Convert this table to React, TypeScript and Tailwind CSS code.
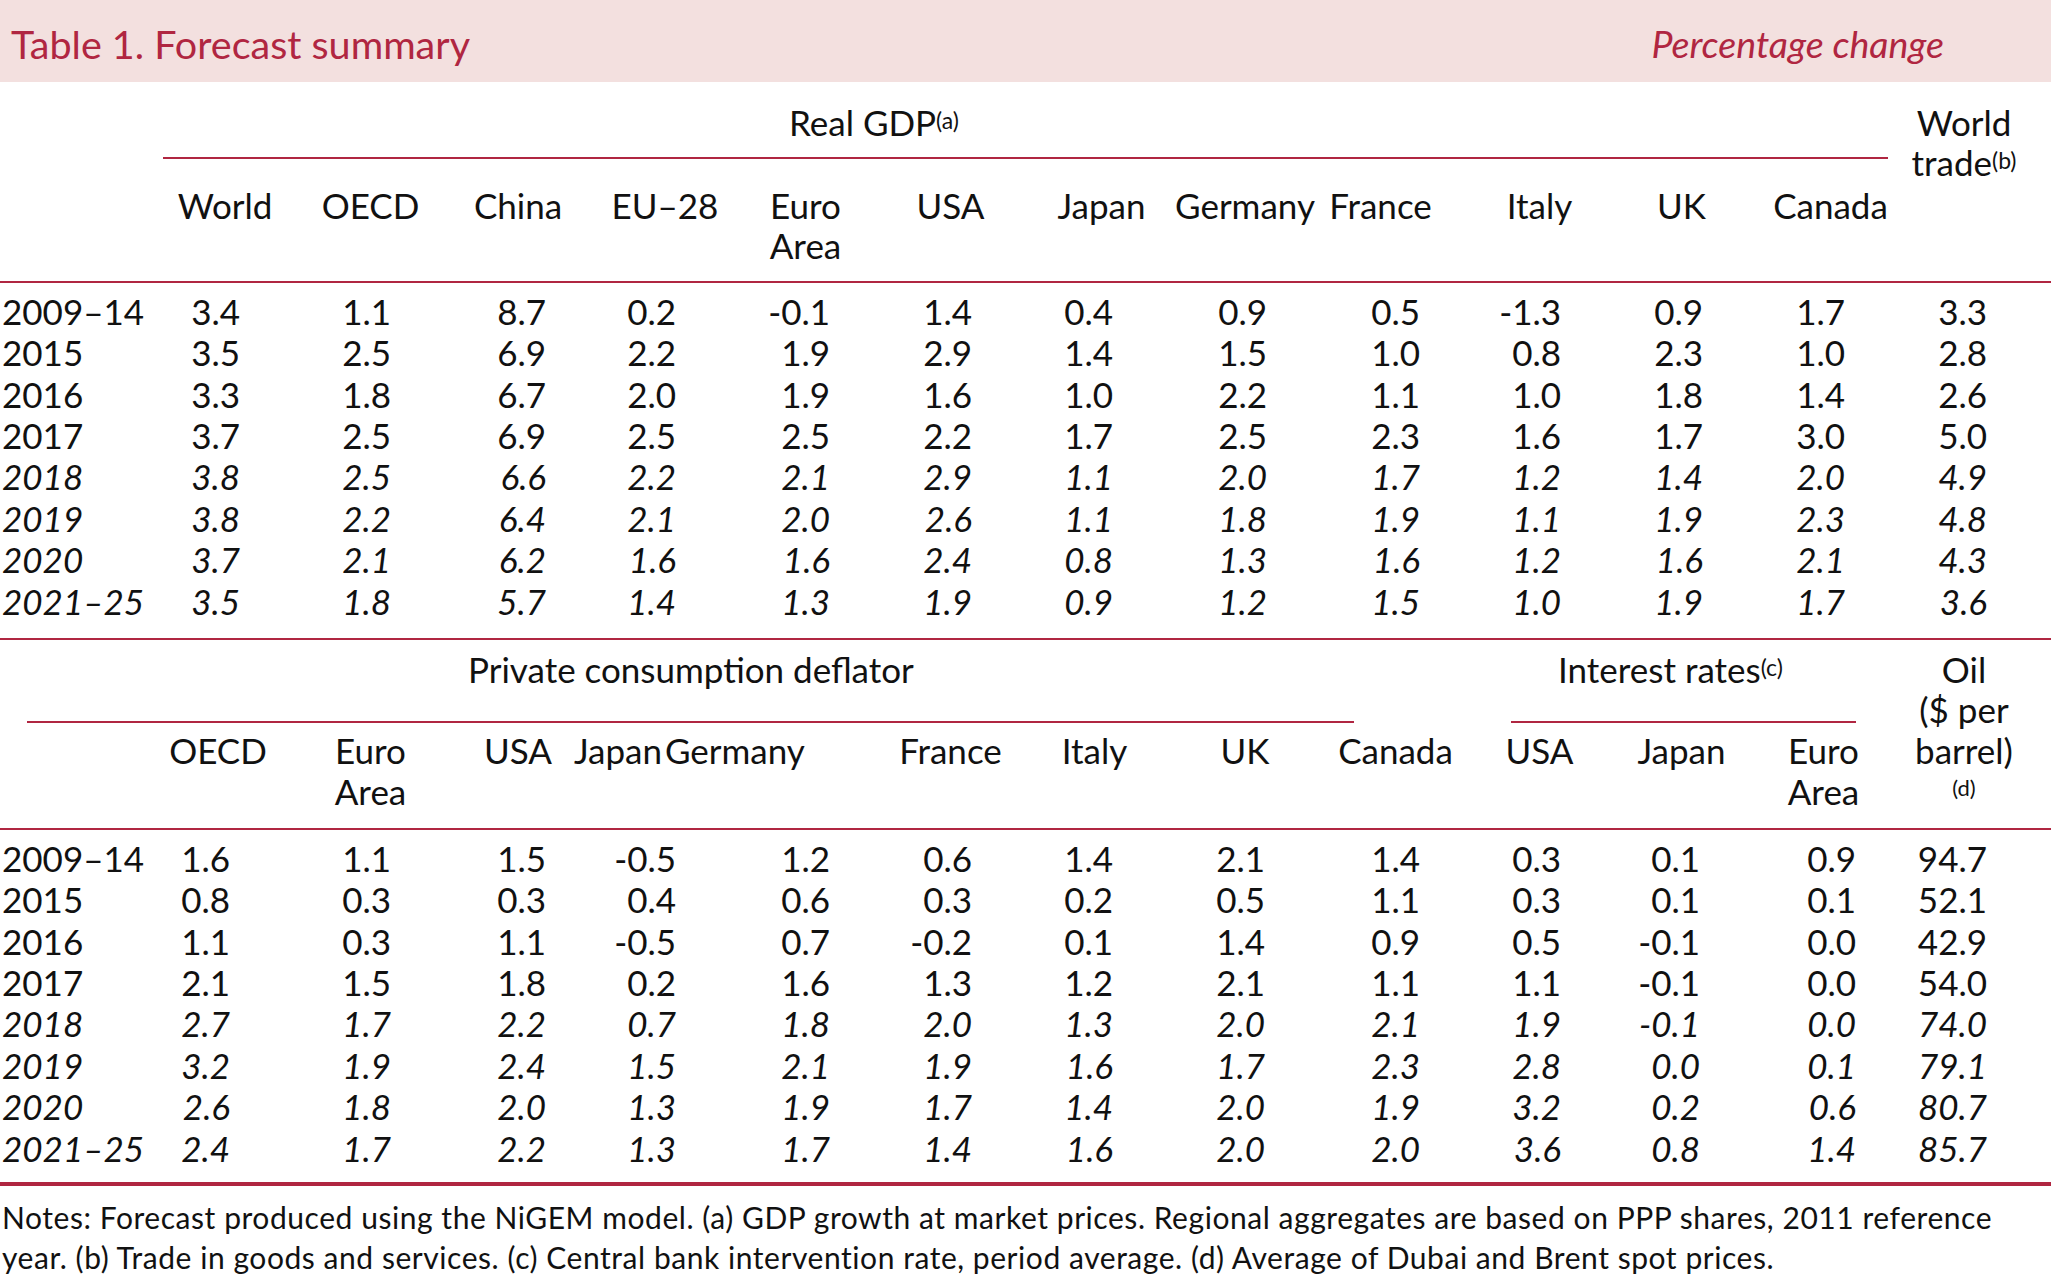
import React from "react";

const GRID =
  "grid grid-cols-[142px_152px_153px_142px_142px_149px_141px_147px_154px_147px_141px_143px_141px_140px]";

const PR1 = [
  "pr-[54px]", "pr-[56px]", "pr-[43px]", "pr-[55px]", "pr-[50px]", "pr-[49px]", "pr-[55px]",
  "pr-[55px]", "pr-[49px]", "pr-[49px]", "pr-[50px]", "pr-[49px]", "pr-[47px]",
];
const PR2 = [
  "pr-[64px]", "pr-[56px]", "pr-[43px]", "pr-[55px]", "pr-[50px]", "pr-[49px]", "pr-[55px]",
  "pr-[57px]", "pr-[49px]", "pr-[49px]", "pr-[53px]", "pr-[38px]", "pr-[47px]",
];

const GDP: [string, string[]][] = [
  ["2009–14", ["3.4", "1.1", "8.7", "0.2", "-0.1", "1.4", "0.4", "0.9", "0.5", "-1.3", "0.9", "1.7", "3.3"]],
  ["2015", ["3.5", "2.5", "6.9", "2.2", "1.9", "2.9", "1.4", "1.5", "1.0", "0.8", "2.3", "1.0", "2.8"]],
  ["2016", ["3.3", "1.8", "6.7", "2.0", "1.9", "1.6", "1.0", "2.2", "1.1", "1.0", "1.8", "1.4", "2.6"]],
  ["2017", ["3.7", "2.5", "6.9", "2.5", "2.5", "2.2", "1.7", "2.5", "2.3", "1.6", "1.7", "3.0", "5.0"]],
  ["2018", ["3.8", "2.5", "6.6", "2.2", "2.1", "2.9", "1.1", "2.0", "1.7", "1.2", "1.4", "2.0", "4.9"]],
  ["2019", ["3.8", "2.2", "6.4", "2.1", "2.0", "2.6", "1.1", "1.8", "1.9", "1.1", "1.9", "2.3", "4.8"]],
  ["2020", ["3.7", "2.1", "6.2", "1.6", "1.6", "2.4", "0.8", "1.3", "1.6", "1.2", "1.6", "2.1", "4.3"]],
  ["2021–25", ["3.5", "1.8", "5.7", "1.4", "1.3", "1.9", "0.9", "1.2", "1.5", "1.0", "1.9", "1.7", "3.6"]],
];

const DEF: [string, string[]][] = [
  ["2009–14", ["1.6", "1.1", "1.5", "-0.5", "1.2", "0.6", "1.4", "2.1", "1.4", "0.3", "0.1", "0.9", "94.7"]],
  ["2015", ["0.8", "0.3", "0.3", "0.4", "0.6", "0.3", "0.2", "0.5", "1.1", "0.3", "0.1", "0.1", "52.1"]],
  ["2016", ["1.1", "0.3", "1.1", "-0.5", "0.7", "-0.2", "0.1", "1.4", "0.9", "0.5", "-0.1", "0.0", "42.9"]],
  ["2017", ["2.1", "1.5", "1.8", "0.2", "1.6", "1.3", "1.2", "2.1", "1.1", "1.1", "-0.1", "0.0", "54.0"]],
  ["2018", ["2.7", "1.7", "2.2", "0.7", "1.8", "2.0", "1.3", "2.0", "2.1", "1.9", "-0.1", "0.0", "74.0"]],
  ["2019", ["3.2", "1.9", "2.4", "1.5", "2.1", "1.9", "1.6", "1.7", "2.3", "2.8", "0.0", "0.1", "79.1"]],
  ["2020", ["2.6", "1.8", "2.0", "1.3", "1.9", "1.7", "1.4", "2.0", "1.9", "3.2", "0.2", "0.6", "80.7"]],
  ["2021–25", ["2.4", "1.7", "2.2", "1.3", "1.7", "1.4", "1.6", "2.0", "2.0", "3.6", "0.8", "1.4", "85.7"]],
];

const H1: [React.ReactNode, string][] = [
  ["World", "pl-[14px]"],
  ["OECD", ""],
  ["China", ""],
  ["EU–28", "pl-[10px]"],
  [<>Euro<br />Area</>, ""],
  ["USA", ""],
  ["Japan", "pl-[14px]"],
  ["Germany", ""],
  ["France", "pr-[30px]"],
  ["Italy", ""],
  ["UK", ""],
  ["Canada", "pl-[14px]"],
];

function Sup({ children }: { children: React.ReactNode }) {
  return <span className="text-[23px] leading-none align-[7px]">{children}</span>;
}

function DataBlock({ rows, pr }: { rows: [string, string[]][]; pr: string[] }) {
  return (
    <div className={`${GRID} auto-rows-[41.43px] leading-[41.43px]`}>
      {rows.map(([label, vals], ri) => {
        const it = ri >= 4 ? "italic" : "";
        return (
          <React.Fragment key={label}>
            <div className={`pl-[2px] text-left whitespace-nowrap ${it}`}>{label}</div>
            {vals.map((v, ci) => (
              <div key={ci} className={`text-right whitespace-nowrap ${pr[ci]} ${it}`}>
                {v}
              </div>
            ))}
          </React.Fragment>
        );
      })}
    </div>
  );
}

export default function App() {
  return (
    <div className="w-[2051px] min-h-[1278px] bg-white text-[#111] font-['Lato',sans-serif] text-[35px] overflow-hidden">
      {/* Title band */}
      <div className="h-[82px] bg-[#f3e0df] flex justify-between items-start pt-[20px] pl-[11px] pr-[107px] leading-[48px] text-[#b02641]">
        <div className="text-[39.5px]">Table 1. Forecast summary</div>
        <div className="italic text-[37.5px]">Percentage change</div>
      </div>

      {/* Section 1 header */}
      <div className={`${GRID} grid-rows-[75px_2px_122px]`}>
        <div className="col-start-2 col-span-12 row-start-1 pt-[19.5px] pl-[647px] leading-[40px] whitespace-nowrap">
          Real GDP<Sup>(a)</Sup>
        </div>
        <div className="col-start-14 row-start-1 row-span-3 pt-[19.5px] leading-[40px] text-center">
          World
          <br />
          trade<Sup>(b)</Sup>
        </div>
        <div className="col-start-2 col-span-12 row-start-2 ml-[21px] mr-[6px] h-[2px] bg-[#b02641]" />
        {H1.map(([h, extra], i) => (
          <div
            key={i}
            className={`row-start-3 pt-[25.5px] leading-[40px] text-center whitespace-nowrap ${extra}`}
            style={{ gridColumnStart: i + 2 }}
          >
            {h}
          </div>
        ))}
      </div>
      <div className="h-[2px] bg-[#b02641]" />

      <div className="pt-[7.7px] pb-[16px]">
        <DataBlock rows={GDP} pr={PR1} />
      </div>
      <div className="h-[2px] bg-[#b02641]" />

      {/* Section 2 header */}
      <div className={`${GRID} grid-rows-[81px_2px_105px]`}>
        <div className="col-start-1 col-span-13 row-start-1 pt-[8.5px] leading-[40px] flex whitespace-nowrap">
          <div className="w-[1511px] shrink-0 pl-[468px]">Private consumption deflator</div>
          <div className="pl-[47px]">
            Interest rates<Sup>(c)</Sup>
          </div>
        </div>
        <div className="col-start-14 row-start-1 row-span-3 pt-[8.5px] leading-[40.5px] text-center whitespace-nowrap">
          <div>Oil</div>
          <div>($ per</div>
          <div>barrel)</div>
          <div className="text-[22px] leading-[25px] mt-[5px]">(d)</div>
        </div>
        <div className="col-start-1 col-span-13 row-start-2 flex">
          <div className="ml-[27px] w-[1327px] h-[2px] bg-[#b02641] shrink-0" />
          <div className="ml-[157px] w-[345px] h-[2px] bg-[#b02641] shrink-0" />
        </div>
        <div className="col-start-2 row-start-3 pt-[6.5px] leading-[41px] text-center">OECD</div>
        <div className="col-start-3 row-start-3 pt-[6.5px] leading-[41px] text-center">
          Euro
          <br />
          Area
        </div>
        <div className="col-start-4 row-start-3 pt-[6.5px] leading-[41px] text-center">USA</div>
        <div className="col-start-5 row-start-3 pt-[6.5px] leading-[41px] text-left -ml-[15px] whitespace-nowrap">
          Japan
        </div>
        <div className="col-start-6 row-start-3 pt-[6.5px] leading-[41px] text-left -ml-[66px] whitespace-nowrap">
          Germany
        </div>
        <div className="col-start-7 row-start-3 pt-[6.5px] leading-[41px] text-center">France</div>
        <div className="col-start-8 row-start-3 pt-[6.5px] leading-[41px] text-center">Italy</div>
        <div className="col-start-9 row-start-3 pt-[6.5px] leading-[41px] text-center">UK</div>
        <div className="col-start-10 row-start-3 pt-[6.5px] leading-[41px] text-center">Canada</div>
        <div className="col-start-11 row-start-3 pt-[6.5px] leading-[41px] text-center">USA</div>
        <div className="col-start-12 row-start-3 pt-[6.5px] leading-[41px] text-center">Japan</div>
        <div className="col-start-13 row-start-3 pt-[6.5px] leading-[41px] text-center">
          Euro
          <br />
          Area
        </div>
      </div>
      <div className="h-[2px] bg-[#b02641]" />

      <div className="pt-[7.7px] pb-[13px]">
        <DataBlock rows={DEF} pr={PR2} />
      </div>
      <div className="h-[4px] bg-[#b02641]" />

      {/* Notes */}
      <div className="pt-[11px] pl-[2px] text-[30px] tracking-[0.55px] leading-[40px] whitespace-nowrap">
        Notes: Forecast produced using the NiGEM model. (a) GDP growth at market prices. Regional aggregates are based on PPP shares, 2011 reference
        <br />
        year. (b) Trade in goods and services. (c) Central bank intervention rate, period average. (d) Average of Dubai and Brent spot prices.
      </div>
    </div>
  );
}
